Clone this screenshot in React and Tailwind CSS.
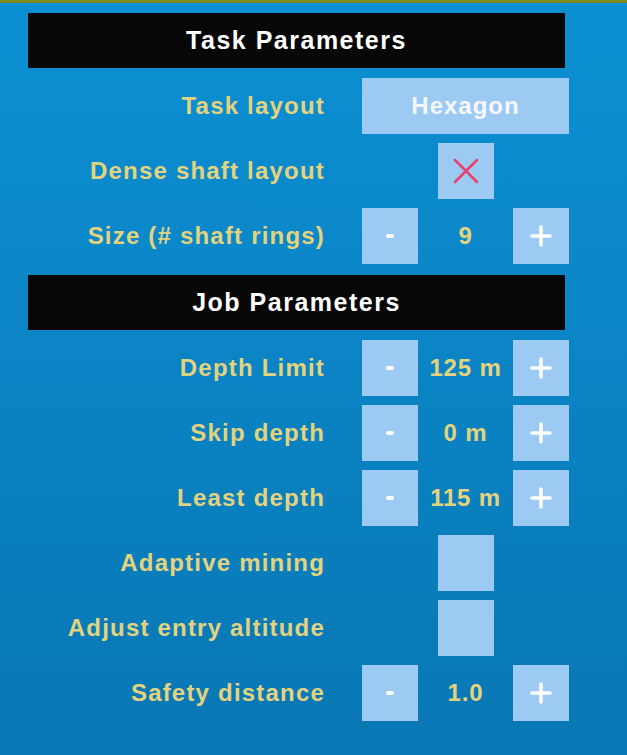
const font = { fontFamily: '"Liberation Sans", Arial, sans-serif' };

const Header = ({ children }) => (
    <div className="flex h-[55px] w-[537px] items-center justify-center bg-[#070707] text-[25px] font-bold tracking-[1.5px] text-white">
        {children}
    </div>
);

const Label = ({ children }) => (
    <div className="w-[297px] text-right text-[24px] font-bold tracking-[1.2px] text-[#e3d37e]">{children}</div>
);

const Square = ({ children }) => (
    <div className="flex h-[56px] w-[56px] items-center justify-center bg-[#9ccaf3]">{children}</div>
);

const Row = ({ label, children }) => (
    <div className="flex h-[56px] items-center">
        <Label>{label}</Label>
        <div className="ml-[37px] flex w-[207px] items-center">{children}</div>
    </div>
);

const Stepper = ({ value }) => (
    <div className="flex w-[207px] items-center justify-between">
        <Square>
            <span className="h-[4px] w-[8px] rounded-sm bg-white" />
        </Square>
        <span className="text-[24px] font-bold tracking-[0.8px] text-[#e3d37e]">{value}</span>
        <Square>
            <svg width="24" height="24" viewBox="0 0 24 24">
                <path d="M12 3 V21 M3 12 H21" stroke="white" strokeWidth="3.5" strokeLinecap="round" />
            </svg>
        </Square>
    </div>
);

const Check = ({ checked }) => (
    <div className="flex w-[207px] justify-center">
        <Square>
            {checked && (
                <svg width="28" height="28" viewBox="0 0 28 28">
                    <path d="M3 3 L25 25 M25 3 L3 25" stroke="#e8426c" strokeWidth="2.5" strokeLinecap="round" />
                </svg>
            )}
        </Square>
    </div>
);

export default function App() {
    return (
        <div style={font} className="min-h-[755px] w-[627px] bg-gradient-to-b from-[#0b90d3] to-[#0977b4]">
            <div className="h-[3px] bg-[#7d8c22]" />
            <div className="flex flex-col pl-[28px] pt-[10px]">
                <Header>Task Parameters</Header>
                <div className="mt-[10px] flex flex-col gap-[9px]">
                    <Row label="Task layout">
                        <div className="flex h-[56px] w-[207px] items-center justify-center bg-[#9ccaf3] text-[24px] font-bold tracking-[1px] text-[#f4f8fc]">
                            Hexagon
                        </div>
                    </Row>
                    <Row label="Dense shaft layout"><Check checked /></Row>
                    <Row label="Size (# shaft rings)"><Stepper value="9" /></Row>
                </div>
                <div className="mt-[11px]">
                    <Header>Job Parameters</Header>
                </div>
                <div className="mt-[10px] flex flex-col gap-[9px]">
                    <Row label="Depth Limit"><Stepper value="125 m" /></Row>
                    <Row label="Skip depth"><Stepper value="0 m" /></Row>
                    <Row label="Least depth"><Stepper value="115 m" /></Row>
                    <Row label="Adaptive mining"><Check /></Row>
                    <Row label="Adjust entry altitude"><Check /></Row>
                    <Row label="Safety distance"><Stepper value="1.0" /></Row>
                </div>
            </div>
        </div>
    );
}
